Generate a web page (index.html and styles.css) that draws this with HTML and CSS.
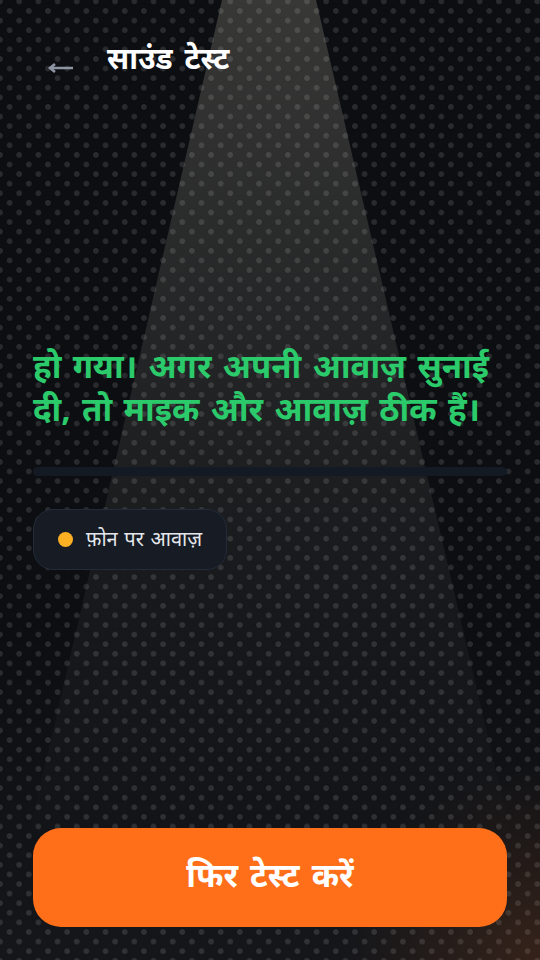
FILE: index.html
```html
<!DOCTYPE html>
<html lang="hi">
<head>
<meta charset="utf-8">
<title>साउंड टेस्ट</title>
<link rel="stylesheet" href="styles.css">
</head>
<body>
<div class="beam"></div>
<main class="screen">
  <header class="top">
    <svg class="back" width="28" height="16" viewBox="0 0 28 16" aria-label="back"><path d="M26 8H3M8 4 3 8l5 4" fill="none" stroke="#8f94a3" stroke-width="2.6"/></svg>
    <h1 class="title">साउंड टेस्ट</h1>
  </header>
  <section class="content">
    <p class="message">हो गया। अगर अपनी आवाज़ सुनाई दी, तो माइक और आवाज़ ठीक हैं।</p>
    <div class="divider"></div>
    <div class="pill"><span class="dot"></span><span class="pill-text">फ़ोन पर आवाज़</span></div>
  </section>
  <button class="cta">फिर टेस्ट करें</button>
</main>
</body>
</html>
```
FILE: styles.css
```css
* { box-sizing: border-box; margin: 0; padding: 0; }
html, body { width: 540px; height: 960px; overflow: hidden; }
body {
  position: relative;
  font-family: "Noto Sans", "Noto Sans Devanagari", sans-serif;
  background-color: #0c0e12;
  background-image:
    radial-gradient(circle at 100% 100%, rgba(255,111,26,.14), rgba(255,111,26,0) 200px),
    linear-gradient(180deg, rgba(255,255,255,0) 65%, rgba(255,255,255,.035) 100%),
    radial-gradient(circle, #282a2e 0 2.6px, rgba(0,0,0,.2) 3.2px, rgba(0,0,0,0) 4.4px),
    radial-gradient(circle, #282a2e 0 2.6px, rgba(0,0,0,.2) 3.2px, rgba(0,0,0,0) 4.4px);
  background-size: 100% 100%, 100% 100%, 19.2px 19.2px, 19.2px 19.2px;
  background-position: 0 0, 0 0, 0 1.4px, 9.6px 11px;
}
.beam {
  position: absolute;
  inset: 0;
  clip-path: polygon(222px 0, 316px 0, 540px 960px, 0 960px);
  background: linear-gradient(180deg, rgba(255,245,220,.18) 0, rgba(255,245,220,.11) 30%, rgba(255,245,220,.06) 55%, rgba(255,245,220,.03) 72%, rgba(255,245,220,0) 88%);
}
.screen {
  position: relative;
  height: 960px;
  padding: 0 33px 33px;
  display: flex;
  flex-direction: column;
}
.top {
  display: flex;
  align-items: flex-start;
  gap: 32px;
  padding: 38px 0 0 14px;
  height: 340px;
}
.back { margin-top: 22px; }
.title {
  font-size: 30px;
  line-height: 40px;
  word-spacing: 4px;
  font-weight: 700;
  color: #fff;
}
.content { flex: 1; }
.message {
  font-size: 33px;
  line-height: 43px;
  word-spacing: 2.8px;
  font-weight: 700;
  color: #2bca6b;
  padding-top: 4px;
}
.divider {
  height: 9px;
  border-radius: 5px;
  background: #141a24;
  margin-top: 37px;
}
.pill {
  display: inline-flex;
  align-items: center;
  gap: 13px;
  height: 61px;
  margin-top: 33px;
  padding: 0 24px;
  border-radius: 20px;
  background: #161b24;
  border: 1px solid #232b3a;
}
.dot { width: 15px; height: 15px; border-radius: 50%; background: #fbb024; }
.pill-text { font-size: 20px; word-spacing: 1.4px; color: #e5e7eb; padding-bottom: 3px; }
.cta {
  height: 99px;
  border: 0;
  border-radius: 28px;
  background: #ff6f1a;
  color: #fff;
  font: 700 33px "Noto Sans", sans-serif;
  word-spacing: 3.5px;
  padding-bottom: 7px;
}
```
